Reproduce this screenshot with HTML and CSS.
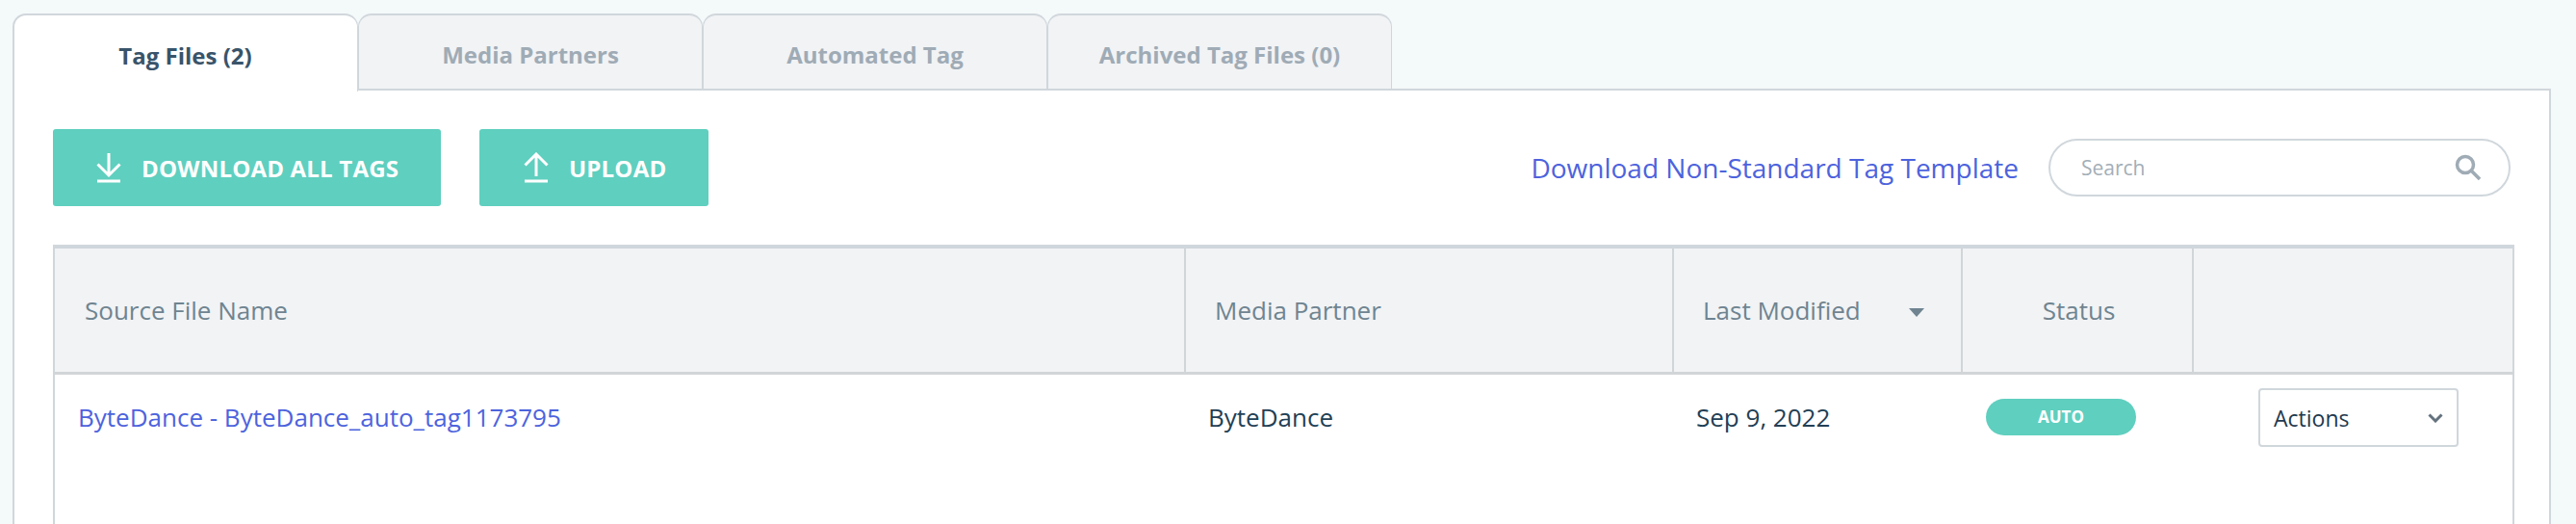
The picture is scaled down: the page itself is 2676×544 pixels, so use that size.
FILE: index.html
```html
<!DOCTYPE html>
<html lang="en">
<head>
    <meta charset="UTF-8">
    <meta name="viewport" content="width=device-width, initial-scale=1.0">
    <title>Tag Files</title>
    <link rel="stylesheet" href="styles.css">
</head>
<body>
    <div class="tabs">
        <a class="tab active">Tag Files (2)</a>
        <a class="tab">Media Partners</a>
        <a class="tab">Automated Tag</a>
        <a class="tab">Archived Tag Files (0)</a>
    </div>
    <div class="panel">
        <div class="toolbar">
            <button class="btn btn-download">
                <svg class="btn-icon" viewBox="0 0 28 32" width="28" height="32">
                    <path d="M14 1V23M2.500 12.500L14 24L25.500 12.500M2 30H26" fill="none" stroke="#fff" stroke-width="3"/>
                </svg>
                DOWNLOAD ALL TAGS
            </button>
            <button class="btn btn-upload">
                <svg class="btn-icon" viewBox="0 0 28 32" width="28" height="32">
                    <path d="M14 25V3M2.500 13.500L14 2L25.500 13.500M2 30H26" fill="none" stroke="#fff" stroke-width="3"/>
                </svg>
                UPLOAD
            </button>
            <a class="template-link">Download Non-Standard Tag Template</a>
            <div class="search">
                <span class="search-text">Search</span>
                <svg viewBox="0 0 28 28" width="28" height="28">
                    <circle cx="11" cy="11" r="8.500" fill="none" stroke="#9fabb5" stroke-width="3.500"/>
                    <path d="M17 17L26 26" fill="none" stroke="#9fabb5" stroke-width="3.500"/>
                </svg>
            </div>
        </div>
        <table class="files">
            <colgroup>
                <col class="col-name">
                <col class="col-partner">
                <col class="col-date">
                <col class="col-status">
                <col>
            </colgroup>
            <thead>
                <tr>
                    <th class="th-name">Source File Name</th>
                    <th class="th-partner">Media Partner</th>
                    <th class="th-date">Last Modified<span class="caret"></span></th>
                    <th class="th-status">Status</th>
                    <th></th>
                </tr>
            </thead>
            <tbody>
                <tr>
                    <td class="td-name"><a>ByteDance - ByteDance_auto_tag1173795</a></td>
                    <td class="td-partner">ByteDance</td>
                    <td class="td-date">Sep 9, 2022</td>
                    <td class="td-status"><span class="badge">AUTO</span></td>
                    <td class="td-actions">
                        <div class="actions">
                            Actions
                            <svg viewBox="0 0 16 10" width="16" height="10">
                                <path d="M1.500 1.500L8 8L14.500 1.500" fill="none" stroke="#64727e" stroke-width="3"/>
                            </svg>
                        </div>
                    </td>
                </tr>
            </tbody>
        </table>
    </div>
</body>
</html>
```

FILE: styles.css
```css
html, body {
    height: 544px;
    overflow: hidden;
}
body {
    margin: 0;
    padding: 14px 26px 0 13px;
    box-sizing: border-box;
    background-color: #f4f9f9;
    font-family: "Open Sans", "Liberation Sans", sans-serif;
    color: #233f55;
}
.tabs {
    display: flex;
    height: 78px;
    position: relative;
    z-index: 1;
}
.tab {
    box-sizing: border-box;
    width: 358px;
    height: 78px;
    display: flex;
    align-items: center;
    justify-content: center;
    padding-top: 4px;
    border: 2px solid #d0d7dc;
    border-bottom: none;
    border-left-width: 1px;
    border-right-width: 1px;
    border-radius: 14px 14px 0 0;
    background-color: #f1f3f5;
    color: #9fabb5;
    font-size: 24px;
    font-weight: 700;
}
.tab.active {
    width: 359px;
    height: 81px;
    padding-right: 1px;
    background-color: #fff;
    color: #39546a;
    border-left-width: 2px;
}
.panel {
    box-sizing: border-box;
    height: 452px;
    padding: 40px 38px 0 40px;
    background-color: #fff;
    border: 2px solid #d0d7dc;
    border-bottom: none;
}
.toolbar {
    display: flex;
    align-items: center;
    height: 80px;
}
.btn {
    display: flex;
    align-items: center;
    height: 80px;
    padding: 0;
    border: none;
    border-radius: 3px;
    background-color: #5fcfbf;
    color: #fff;
    font-family: inherit;
    font-size: 24px;
    font-weight: 700;
    letter-spacing: 0.2px;
}
.btn-icon {
    margin-right: 20px;
}
.btn-download {
    width: 403px;
    padding-left: 44px;
    margin-right: 40px;
}
.btn-upload {
    width: 238px;
    padding-left: 45px;
}
.template-link {
    margin-left: auto;
    margin-right: 31px;
    color: #4d63dd;
    font-size: 28px;
}
.search {
    box-sizing: border-box;
    width: 480px;
    height: 60px;
    margin-right: 2px;
    display: flex;
    align-items: center;
    justify-content: space-between;
    padding: 0 28px 0 32px;
    border: 2px solid #d0d7dc;
    border-radius: 30px;
}
.search-text {
    color: #a3aeb7;
    font-size: 21px;
}
.files {
    width: 2557px;
    margin-top: 40px;
    border-collapse: collapse;
    table-layout: fixed;
    border-left: 2px solid #d0d7dc;
    border-right: 2px solid #d0d7dc;
}
.col-name { width: 1175px; }
.col-partner { width: 507px; }
.col-date { width: 300px; }
.col-status { width: 240px; }
.files th {
    height: 128px;
    padding: 0;
    background-color: #f1f3f5;
    border-top: 4px solid #d0d7dc;
    border-bottom: 3px solid #d2d5d7;
    border-left: 2px solid #d2d5d7;
    color: #6f8490;
    font-size: 26px;
    font-weight: 400;
    text-align: left;
}
.files th:first-child {
    border-left: none;
}
.files .th-name { padding-left: 31px; }
.files .th-partner { padding-left: 30px; }
.files .th-date { padding-left: 30px; }
.files .th-status { padding-left: 3px; text-align: center; }
.caret {
    display: inline-block;
    margin-left: 50px;
    vertical-align: 3px;
    border-left: 8px solid transparent;
    border-right: 8px solid transparent;
    border-top: 9px solid #6f8490;
}
.files td {
    height: 158px;
    padding: 0;
    font-size: 26px;
    vertical-align: top;
}
.td-name a { color: #4d63dd; }
.files .td-name, .files .td-partner, .files .td-date {
    line-height: 88px;
}
.files .td-name { padding-left: 24px; }
.files .td-partner { padding-left: 24px; }
.files .td-date { padding-left: 24px; }
.td-status { text-align: center; }
.badge {
    display: block;
    width: 156px;
    height: 38px;
    margin: 25px 0 0 25px;
    border-radius: 19px;
    background-color: #5fcfbf;
    color: #fff;
    font-size: 17px;
    font-weight: 700;
    line-height: 38px;
}
.actions {
    box-sizing: border-box;
    width: 208px;
    height: 61px;
    margin: 14px 0 0 68px;
    padding: 0 14px;
    display: flex;
    align-items: center;
    justify-content: space-between;
    border: 2px solid #d0d7dc;
    border-radius: 4px;
    color: #1f3a50;
    font-size: 23px;
}
```
